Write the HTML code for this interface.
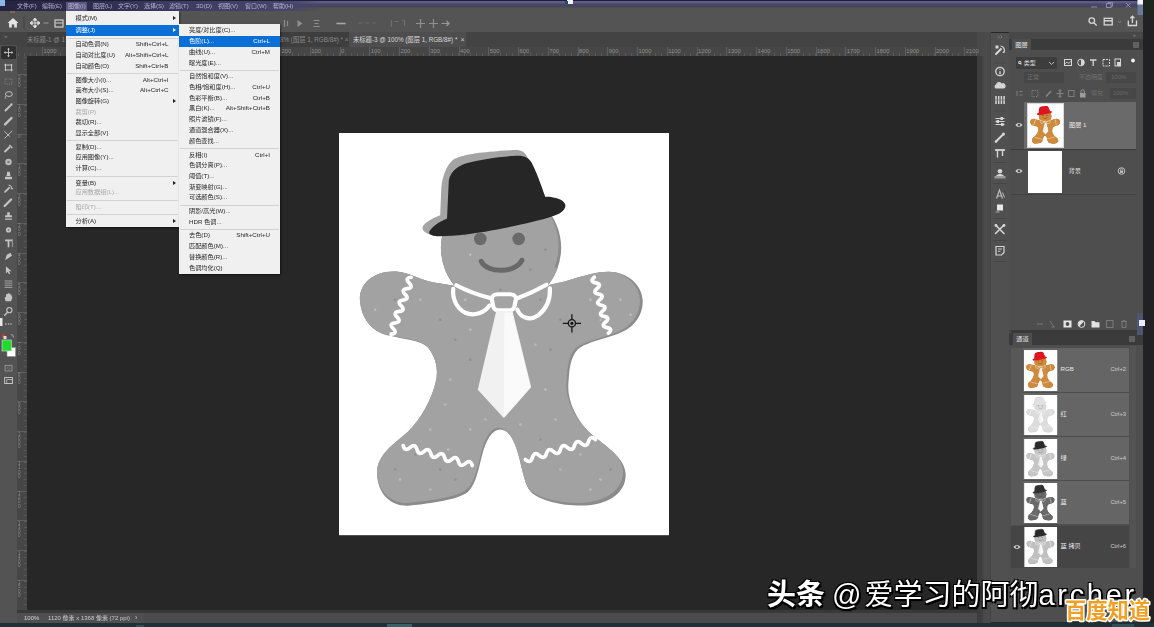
<!DOCTYPE html>
<html lang="zh-CN">
<head>
<meta charset="utf-8">
<title>Photoshop</title>
<style>
html,body{margin:0;padding:0;}
body{width:1154px;height:627px;overflow:hidden;background:#282828;position:relative;font-family:"Liberation Sans","Noto Sans CJK SC",sans-serif;font-size:7px;color:#ddd;}
.abs{position:absolute;}
#ui{position:absolute;left:0;top:0;width:1154px;height:627px;filter:blur(0.45px);}
#stage{position:absolute;left:0;top:0;width:1154px;height:627px;overflow:hidden;}
/* top bars */
#titleline{left:0;top:0;width:1143px;height:8px;background:linear-gradient(#1f1e36 0,#1f1e36 1px,#62608c 1px,#5a587f 3px,#4a4866 4px,#45435f 6px,#505050 8px);}
#menubar{z-index:2;left:0;top:1px;width:330px;height:10px;background:linear-gradient(90deg,#262440 0,#2c2a48 80px,#3c3a5e 160px,#46446a 285px,rgba(70,68,106,0) 320px);}
#menubar span{position:absolute;top:1px;line-height:9px;font-size:6px;color:#b4b2d6;white-space:nowrap;}
#optbar{left:0;top:8px;width:1143px;height:24px;background:#545454;}
#tabbar{left:0;top:32px;width:977px;height:16px;background:#434343;}
#hruler{z-index:1;left:17px;top:47px;width:963px;height:9px;background:#464646;}
#hruler span{position:absolute;top:0;font-size:5.800px;line-height:8px;color:#909090;}
#toolbar{left:0;top:45px;width:17px;height:578px;z-index:1;background:#535353;}
#vruler{left:17px;top:56px;width:10px;height:557px;background:#464646;}
#canvasbg{left:27px;top:56px;width:950px;height:554px;background:#272727;box-shadow:1px 0 0 #323232,0 1px 0 #323232;}
#statusbar{left:0;top:613px;width:977px;height:10px;background:#4f4f4f;box-shadow:0 -3px 0 #393939;}
#taskbar{left:0;top:623px;width:1154px;height:4px;background:#1d3238;}
#rightdark{left:1143px;top:0;width:11px;height:627px;background:#222224;}
#dockgap{left:977px;top:32px;width:14px;height:591px;background:linear-gradient(90deg,#3c3c3c 0,#3f3f3f 5px,#4a4a4a 7px) 0 24px no-repeat,#4a4a4a;}
#iconstrip{left:991px;top:33px;width:18px;height:589px;background:#505050;box-shadow:-1px 0 0 #444,1px 0 0 #474747;}
#panelcol{left:1009px;top:32px;width:134px;height:590px;background:#484848;}

#hruler i{position:absolute;top:0;width:1px;height:9px;background:#5e5e5e;}
#hruler{background-image:repeating-linear-gradient(90deg,#585858 0,#585858 1px,transparent 1px,transparent 5.950px);background-position:1.200px 6px;background-size:100% 3px;background-repeat:no-repeat;}
#vruler i{position:absolute;left:0;height:1px;width:10px;background:#5e5e5e;}
#vruler span{position:absolute;left:1px;width:4px;font-size:4.500px;line-height:4.200px;color:#8c8c8c;word-break:break-all;white-space:normal;}
#vruler{background-image:repeating-linear-gradient(180deg,#585858 0,#585858 1px,transparent 1px,transparent 5.950px);background-position:7px 0.700px;background-size:3px 100%;background-repeat:no-repeat;}
/* right panels */
#panelcol .hdr{position:absolute;left:0;width:134px;height:11px;background:#3b3b3b;}
#panelcol .hdr .tab{position:absolute;left:3px;top:0;height:11px;width:19px;background:#4e4e4e;color:#e6e6e6;font-size:6.200px;line-height:11px;text-align:center;}
#panelcol .body{position:absolute;left:0;width:134px;background:#4e4e4e;}
.row{position:absolute;left:12px;width:113px;background:#686868;}
.row .nm{position:absolute;font-size:6.200px;color:#e8e8e8;white-space:nowrap;line-height:8px;}
.row .sc{position:absolute;font-size:5.800px;color:#cfcfcf;white-space:nowrap;line-height:8px;right:8px;}
.th{position:absolute;display:block;}
.eye{position:absolute;width:7px;height:5px;}
/* menus */
.menu{z-index:5;background:#f0f0f0;color:#262626;font-size:6.200px;box-shadow:1px 1px 2px rgba(0,0,0,.5);}
.menu .it{position:absolute;left:0;right:0;height:10.6px;line-height:10.6px;white-space:nowrap;}
.menu .it b{font-weight:normal;position:absolute;left:10px;}
.menu .it i{font-style:normal;position:absolute;right:10px;}
.menu .it.dis{color:#a8a8a8;}
.menu .it.hl{background:#0a6fd6;color:#fff;}
.menu .sep{position:absolute;left:1px;right:1px;height:1px;background:#d2d2d2;}
.menu u.arr{position:absolute;right:3px;top:3px;width:0;height:0;border-left:3px solid #222;border-top:2.5px solid transparent;border-bottom:2.5px solid transparent;}
.menu .hl u.arr{border-left-color:#fff;}
</style>
</head>
<body>
<div id="stage">
<div id="ui">
<div class="abs" id="canvasbg"></div>
<div class="abs" id="titleline"></div>
<div class="abs" id="menubar">
<div class="abs" style="left:66px;top:1px;width:21px;height:9px;background:#5a5880"></div><span style="left:17px">文件(F)</span><span style="left:42px">编辑(E)</span><span style="left:68px">图像(I)</span><span style="left:93px">图层(L)</span><span style="left:118px">文字(Y)</span><span style="left:144px">选择(S)</span><span style="left:169px">滤镜(T)</span><span style="left:196px">3D(D)</span><span style="left:218px">视图(V)</span><span style="left:245px">窗口(W)</span><span style="left:273px">帮助(H)</span>
</div>
<div class="abs" id="optbar">
<svg class="abs" style="left:0;top:0" width="1143" height="24" viewBox="-0.5 7 1143 24">
<rect x="66" y="8" width="21" height="3" fill="#6a6a6a"/>
<path d="M12.5 17 L7 22 H8.6 V26.5 H11.3 V23.4 H13.7 V26.5 H16.4 V22 H18 Z" fill="#e4e4e4"/>
<rect x="23" y="15" width="1" height="13" fill="#454545"/>
<path d="M34.500 18 V26 M30.500 22 H38.500 M34.500 17 l-1.800 2.200 h3.600 z M34.500 27 l-1.800 -2.200 h3.600 z M29.500 22 l2.200 -1.800 v3.600 z M39.500 22 l-2.200 -1.800 v3.600 z" stroke="#dcdcdc" stroke-width="1" fill="#dcdcdc"/>
<path d="M43 22 h5" stroke="#9a9a9a" stroke-width="1"/>
<rect x="54.5" y="19" width="8" height="7" fill="none" stroke="#d0d0d0" stroke-width="1.2"/><path d="M55 22 h7" stroke="#d0d0d0"/>
<g stroke="#8e8e8e" stroke-width="1.2" fill="none">
<path d="M284 19 v7 M287 20 v5"/><path d="M297 19 l5 3.5 l-5 3.5 z" fill="#8e8e8e" stroke="none"/>
<path d="M313 19.5 h6 M314 22.5 h4 M313 25.5 h6"/>
<path d="M336 22.5 h9" stroke="#a8a8a8" stroke-width="1.6"/>
<path d="M358 22 h4 M365 22 h4 M372 22 h3" stroke="#6c6c6c"/>
<path d="M391 19 v7 M394 20.5 h4 M402 18.5 l3 3 M404 19 v6" stroke="#6e6e6e"/>
<path d="M420 18 v9 M415.5 22.5 h9" stroke="#909090"/>
<path d="M433 18 v9 M428.500 22.5 h9" stroke="#909090"/>
<path d="M441 22.5 h7 M446 20 l2.500 2.500 l-2.500 2.500" stroke="#9a9a9a"/>
</g>
<g stroke="#d6d6d6" stroke-width="1.300" fill="none">
<circle cx="1091.300" cy="19.600" r="2.800"/><path d="M1093.400 21.700 l2.800 2.800"/>
<rect x="1103.700" y="17.300" width="8" height="6.600"/><path d="M1103.700 19.800 h8" stroke-width="1.500"/>
<path d="M1117.500 20 l1.600 1.800 l1.600 -1.800" stroke="#8a8a8a" stroke-width="0.900"/>
<path d="M1127.800 19.500 v5 h8.200 v-5"/><path d="M1131.900 22 v-6.500 M1129.900 17.300 l2 -2.200 l2 2.200"/>
</g>
<g stroke="#b4b2d4" stroke-width="1" fill="none" transform="translate(0,-8)">
</g>
</svg>
</div>
<div class="abs" id="tabbar">
<div class="abs" style="left:27px;top:0;width:322px;height:16px;background:#3e3e3e"></div>
<div class="abs" style="left:349px;top:0;width:117px;height:16px;background:#4e4e4e"></div>
<span class="abs" style="left:4px;top:0;font-size:6px;line-height:9px;color:#888">»</span>
<span class="abs" style="left:27px;top:2px;font-size:6.300px;line-height:11px;color:#8a8a8a;white-space:nowrap">未标题-1 @ 1</span>
<span class="abs" style="left:280px;top:2px;font-size:6.300px;line-height:11px;color:#8a8a8a;white-space:nowrap">8% (图层 1, RGB/8#) * ×</span>
<span class="abs" style="left:353px;top:2px;font-size:6.300px;line-height:11px;color:#dadada;white-space:nowrap">未标题-3 @ 100% (图层 1, RGB/8#) * &nbsp;×</span>
</div>
<div class="abs" id="hruler"><i style="left:25.0px"></i><span style="left:26.5px">1000</span><i style="left:54.8px"></i><span style="left:56.2px">900</span><i style="left:84.5px"></i><span style="left:86.0px">800</span><i style="left:114.2px"></i><span style="left:115.8px">700</span><i style="left:144.0px"></i><span style="left:145.5px">600</span><i style="left:173.8px"></i><span style="left:175.2px">500</span><i style="left:203.5px"></i><span style="left:205.0px">400</span><i style="left:233.2px"></i><span style="left:234.8px">300</span><i style="left:263.0px"></i><span style="left:264.5px">200</span><i style="left:292.8px"></i><span style="left:294.2px">100</span><i style="left:322.5px"></i><span style="left:324.0px">0</span><i style="left:352.2px"></i><span style="left:353.8px">100</span><i style="left:382.0px"></i><span style="left:383.5px">200</span><i style="left:411.8px"></i><span style="left:413.2px">300</span><i style="left:441.5px"></i><span style="left:443.0px">400</span><i style="left:471.2px"></i><span style="left:472.8px">500</span><i style="left:501.0px"></i><span style="left:502.5px">600</span><i style="left:530.8px"></i><span style="left:532.2px">700</span><i style="left:560.5px"></i><span style="left:562.0px">800</span><i style="left:590.2px"></i><span style="left:591.8px">900</span><i style="left:620.0px"></i><span style="left:621.5px">1000</span><i style="left:649.8px"></i><span style="left:651.2px">1100</span><i style="left:679.5px"></i><span style="left:681.0px">1200</span><i style="left:709.2px"></i><span style="left:710.8px">1300</span><i style="left:739.0px"></i><span style="left:740.5px">1400</span><i style="left:768.8px"></i><span style="left:770.2px">1500</span><i style="left:798.5px"></i><span style="left:800.0px">1600</span><i style="left:828.2px"></i><span style="left:829.8px">1700</span><i style="left:858.0px"></i><span style="left:859.5px">1800</span><i style="left:887.8px"></i><span style="left:889.2px">1900</span><i style="left:917.5px"></i><span style="left:919.0px">2000</span><i style="left:947.2px"></i><span style="left:948.8px">2100</span></div>
<div class="abs" id="toolbar"><svg class="abs" style="left:0;top:0" width="17" height="568" viewBox="0 45 17 568"><rect x="1" y="46" width="15" height="13" rx="1.500" fill="#2f2f2f"/><g transform="translate(8.500,52.5) scale(0.860)"><path d="M0-4.500V4.500M-4.500 0H4.500" stroke="#c4c4c4" stroke-width="1.100"/><path d="M0-5.500l-1.700 2h3.400zM0 5.500l-1.700-2h3.400zM-5.500 0l2-1.700v3.400zM5.500 0l-2-1.700v3.400z" fill="#c4c4c4"/></g><g transform="translate(8.500,67.5) scale(0.860)"><path d="M-3.500-4.500V4M3.500-4V4.500M-5-3H4.500M-4.500 3H5" stroke="#c4c4c4" stroke-width="1.200" fill="none"/></g><g transform="translate(8.500,81.5) scale(0.860)"><rect x="-4" y="-3" width="8" height="6" fill="none" stroke="#8a8a8a" stroke-dasharray="1.500 1.200" stroke-width="0.900"/></g><g transform="translate(8.500,94.5) scale(0.860)"><ellipse cx="0.500" cy="-0.500" rx="4" ry="2.800" fill="none" stroke="#c4c4c4" stroke-width="1.100"/><path d="M-3 1.500q-1.500 2 0 3.500" stroke="#c4c4c4" fill="none" stroke-width="1"/></g><g transform="translate(8.500,107.5) scale(0.860)"><path d="M-3.500 3.500L2.500-2.500" stroke="#c4c4c4" stroke-width="2.200" stroke-linecap="round"/><circle cx="3.500" cy="-3.500" r="1.300" fill="#c4c4c4"/></g><g transform="translate(8.500,121) scale(0.860)"><path d="M-4 4L3.500-3.500" stroke="#c4c4c4" stroke-width="2.800" stroke-linecap="round"/></g><g transform="translate(8.500,134.5) scale(0.860)"><path d="M-4.500 4.500L4-4M-4.500-3.500L1 2" stroke="#c4c4c4" stroke-width="1.100" stroke-linecap="round"/></g><g transform="translate(8.500,148.5) scale(0.860)"><path d="M-4 3.500L1 -1.500" stroke="#c4c4c4" stroke-width="2.200" stroke-linecap="round"/><path d="M1-4l3.500 3.500" stroke="#c4c4c4" stroke-width="1.500"/></g><g transform="translate(8.500,162) scale(0.860)"><circle cx="0" cy="0" r="3.700" fill="#bdbdbd"/><circle cx="0" cy="0" r="1.500" fill="#7d7d7d"/></g><g transform="translate(8.500,175.5) scale(0.860)"><path d="M-1.500-4.500h3l0.800 5h-4.600zM-4 1.500h8v3h-8z" fill="#c4c4c4"/></g><g transform="translate(8.500,188.5) scale(0.860)"><path d="M-4 4L1-1" stroke="#c4c4c4" stroke-width="2" stroke-linecap="round"/><path d="M0-4a4 4 0 0 1 4 4" stroke="#c4c4c4" fill="none" stroke-width="1.100"/><path d="M2.500-0.500l1.500 2 1.500-2z" fill="#c4c4c4"/></g><g transform="translate(8.500,202.5) scale(0.860)"><path d="M-4.500 4L3-3.500" stroke="#c4c4c4" stroke-width="2.600" stroke-linecap="round"/></g><g transform="translate(8.500,216) scale(0.860)"><path d="M-1.500-4.500h3v3.500h2.500v2.500h-8v-2.500h2.500zM-4 3h8v1.500h-8z" fill="#c4c4c4"/></g><g transform="translate(8.500,229.5) scale(0.860)"><circle cx="0" cy="0.500" r="3" fill="#c4c4c4"/><circle cx="0" cy="0.500" r="1.100" fill="#777"/></g><g transform="translate(8.500,243) scale(0.860)"><path d="M-4-4h8v2h-3v7h-2v-7h-3z" fill="#c4c4c4"/><path d="M4.500-4.500v9" stroke="#c4c4c4" stroke-width="0.800"/></g><g transform="translate(8.500,256.5) scale(0.860)"><path d="M-4 4.500L-2-2 2.500-4.500 4-1 -4 4.500z" fill="#c4c4c4"/></g><g transform="translate(8.500,270) scale(0.860)"><path d="M-3-4.500L3.500 1.500H0.500L2 4.500 0.500 5 -1 2 -3 4z" fill="#c4c4c4"/></g><g transform="translate(8.500,284) scale(0.860)"><path d="M-4.500-3.500h9M-4.500-1h9M-4.500 1.500h9M-4.500 4h9" stroke="#a8a8a8" stroke-width="1.100"/></g><g transform="translate(8.500,297.5) scale(0.860)"><path d="M-3.500 4.500L-4.500 0 -3-0.500 -2.500-4 -1-4 -0.500-5 1-5 1.500-4 3-3.500 4.500 0 3 4.500z" fill="#c4c4c4"/></g><g transform="translate(8.500,311) scale(0.860)"><circle cx="1" cy="-1" r="3" fill="none" stroke="#c4c4c4" stroke-width="1.300"/><path d="M-1 1.500L-4.500 5" stroke="#c4c4c4" stroke-width="1.600" stroke-linecap="round"/></g><g transform="translate(8.500,324) scale(0.860)"><circle cx="-3" cy="0" r="0.900" fill="#c4c4c4"/><circle cx="0" cy="0" r="0.900" fill="#c4c4c4"/><circle cx="3" cy="0" r="0.900" fill="#c4c4c4"/></g><rect x="0" y="318" width="2.500" height="8" fill="#e8e8e8"/><path d="M2 334.500h3v3h-3z" fill="#d33"/><path d="M3.500 336h3v3h-3z" fill="#ddd"/><path d="M11 334.500q2.500 0 2.500 3" stroke="#bbb" fill="none" stroke-width="0.800"/><rect x="7" y="347.500" width="8.500" height="9" fill="#fff" stroke="#888" stroke-width="0.500"/><rect x="2" y="340" width="9.500" height="11" fill="#1fdc2a" stroke="#ddd" stroke-width="0.600"/><g transform="translate(8.500,368) scale(0.860)"><rect x="-4" y="-3" width="8" height="6.500" fill="none" stroke="#9a9a9a" stroke-width="1"/><circle cx="0" cy="0.200" r="1.600" fill="none" stroke="#9a9a9a" stroke-width="0.800" stroke-dasharray="1 0.700"/></g><g transform="translate(8.500,380.5) scale(0.860)"><rect x="-4.500" y="-3.500" width="9" height="7" fill="none" stroke="#c4c4c4" stroke-width="1.100"/><rect x="-2" y="-1" width="6.500" height="4.500" fill="none" stroke="#c4c4c4" stroke-width="0.900"/></g></svg></div>
<div class="abs" id="vruler"><i style="top:18.0px"></i><span style="top:19.5px">200</span><i style="top:47.8px"></i><span style="top:49.2px">100</span><i style="top:77.5px"></i><span style="top:79.0px">0</span><i style="top:107.2px"></i><span style="top:108.8px">100</span><i style="top:137.0px"></i><span style="top:138.5px">200</span><i style="top:166.8px"></i><span style="top:168.2px">300</span><i style="top:196.5px"></i><span style="top:198.0px">400</span><i style="top:226.2px"></i><span style="top:227.8px">500</span><i style="top:256.0px"></i><span style="top:257.5px">600</span><i style="top:285.8px"></i><span style="top:287.2px">700</span><i style="top:315.5px"></i><span style="top:317.0px">800</span><i style="top:345.2px"></i><span style="top:346.8px">900</span><i style="top:375.0px"></i><span style="top:376.5px">1000</span><i style="top:404.8px"></i><span style="top:406.2px">1100</span><i style="top:434.5px"></i><span style="top:436.0px">1200</span><i style="top:464.2px"></i><span style="top:465.8px">1300</span><i style="top:494.0px"></i><span style="top:495.5px">1400</span><i style="top:523.8px"></i><span style="top:525.2px">1500</span></div>
<div class="abs" id="statusbar">
<div class="abs" style="left:0;top:0;width:17px;height:10px;background:#535353"></div>
<div class="abs" style="left:144px;top:0;width:833px;height:10px;background:#4b4b4b"></div>
<span class="abs" style="left:24px;top:1px;font-size:6px;line-height:8px;color:#d4d4d4;white-space:nowrap">100%</span>
<span class="abs" style="left:48px;top:1px;font-size:6px;line-height:8px;color:#c8c8c8;white-space:nowrap">1120 像素 x 1368 像素 (72 ppi)</span>
<span class="abs" style="left:135px;top:0.500px;font-size:7px;line-height:8px;color:#c8c8c8">›</span>
</div>
<div class="abs" id="dockgap"></div>
<div class="abs" id="iconstrip"><svg class="abs" style="left:0;top:0" width="18" height="589" viewBox="991 33 18 589"><path d="M998 35.500l1.500 1.500l-1.500 1.500M1000.500 35.500l1.500 1.500l-1.500 1.500" stroke="#8a8a8a" fill="none" stroke-width="0.700"/><rect x="993" y="62.5" width="14" height="1" fill="#454545"/><rect x="993" y="110.5" width="14" height="1" fill="#454545"/><rect x="993" y="162" width="14" height="1" fill="#454545"/><rect x="993" y="183" width="14" height="1" fill="#454545"/><rect x="993" y="218" width="14" height="1" fill="#454545"/><rect x="993" y="240" width="14" height="1" fill="#454545"/><rect x="993" y="261" width="14" height="1" fill="#454545"/><g transform="translate(1000,50.5)"><path d="M-4 3.500l5-5" stroke="#d6d6d6" stroke-width="2" stroke-linecap="round"/><path d="M0.500-4.500a4.200 4.200 0 0 1 3.500 6" stroke="#d6d6d6" fill="none" stroke-width="1.200"/><path d="M2 2l2.500 0.500 0.500-2.500z" fill="#d6d6d6"/><rect x="-4.500" y="-5" width="3" height="3" fill="#d6d6d6"/></g><g transform="translate(1000,71.5)"><circle r="4.200" fill="none" stroke="#d6d6d6" stroke-width="1.300"/><path d="M0-2.200v0.800M0-0.300v3" stroke="#d6d6d6" stroke-width="1.300"/></g><g transform="translate(1000,86)"><path d="M-4.500 2.500a2.300 2.300 0 0 1 0.500-4a3 3 0 0 1 5.500-1a2.500 2.500 0 0 1 2.500 5z" fill="#d6d6d6"/></g><g transform="translate(1000,100)"><path d="M-4-4v8M-1.300-4v8M1.400-4v8M4.100-4v8" stroke="#d6d6d6" stroke-width="1.500"/><path d="M-5 0h10" stroke="#777" stroke-width="0.800"/></g><g transform="translate(1000,121.5)"><path d="M-4.500-3h9M-4.500 0h9M-4.500 3h9" stroke="#d6d6d6" stroke-width="1.200"/><rect x="0.500" y="-4.500" width="2.500" height="3" fill="#d6d6d6"/><rect x="-3.500" y="-1.500" width="2.500" height="3" fill="#d6d6d6"/><rect x="1" y="1.500" width="2.500" height="3" fill="#d6d6d6"/></g><g transform="translate(1000,137.5)"><path d="M-4 4L3-3" stroke="#d6d6d6" stroke-width="2" stroke-linecap="round"/><circle cx="3.500" cy="-3.500" r="1.500" fill="#d6d6d6"/><circle cx="-4" cy="4" r="1.300" fill="#d6d6d6"/></g><g transform="translate(1000,153)"><path d="M-5-3h10" stroke="#d6d6d6" stroke-width="1.800"/><path d="M-2.500-3v7.500M2.500-3v6" stroke="#d6d6d6" stroke-width="1.400"/></g><g transform="translate(1000,173.5)"><circle cx="0" cy="-2.200" r="2.300" fill="#d6d6d6"/><path d="M-4.500 4.500a4.500 4 0 0 1 9 0z" fill="#d6d6d6"/><rect x="-5.500" y="2.500" width="11" height="2.500" fill="#9a9a9a"/></g><g transform="translate(1000,194.5)"><path d="M-3.500 4l3-8.500 3 8.500M-2.500 1.500h4.500" stroke="#bdbdbd" fill="none" stroke-width="1.200"/><path d="M2.500-2l2 5" stroke="#bdbdbd" stroke-width="1"/></g><g transform="translate(1000,207.5)"><rect x="-3" y="-3" width="6" height="6" fill="#e8e8e8"/><path d="M-4.500 4.500h4" stroke="#aaa" stroke-width="1"/></g><g transform="translate(1000,229)"><path d="M-4.500-4L4 4.500M4-4L-4.500 4.500" stroke="#d6d6d6" stroke-width="1.600" stroke-linecap="round"/><circle cx="-4" cy="-3.500" r="1.400" fill="#d6d6d6"/><circle cx="4" cy="-3.500" r="1.400" fill="#d6d6d6"/></g><g transform="translate(1000,250.5)"><path d="M-4-4h8v6l-2.500 2.500h-5.500z" fill="none" stroke="#d6d6d6" stroke-width="1.200"/><path d="M-2-1.500h4M-2 0.800h2.500" stroke="#d6d6d6" stroke-width="0.900"/></g></svg></div>
<div class="abs" id="panelcol">
<span class="abs" style="left:124px;top:1px;font-size:5px;line-height:5px;color:#8a8a8a">»</span>
<div class="hdr" style="top:6.5px"><div class="tab">图层</div><svg class="abs" style="right:4px;top:3px" width="6" height="6"><path d="M0 1h6M0 3h6M0 5h6" stroke="#9a9a9a" stroke-width="0.800"/></svg></div>
<div class="body" style="top:17.5px;height:280.5px"></div>
<div class="abs" style="left:7px;top:25px;width:41px;height:12px;background:#3d3d3d;border-radius:1px"></div>
<span class="abs" style="left:9px;top:26px;font-size:6px;line-height:10px;color:#dcdcdc;white-space:nowrap">ᑫ 类型</span>
<svg class="abs" style="left:39px;top:29px" width="8" height="5"><path d="M1 1l2.500 2.500l2.500 -2.500" stroke="#bbb" fill="none"/></svg>
<svg class="abs" style="left:51px;top:24px" width="82" height="14" viewBox="1060 56 82 14">
<rect x="1064.500" y="59.500" width="7" height="6" fill="none" stroke="#d8d8d8"/><path d="M1065 64l2-2 2 1.500 2-2.500" stroke="#d8d8d8" fill="none" stroke-width="0.800"/>
<circle cx="1081" cy="62.500" r="3.300" fill="none" stroke="#d8d8d8"/><path d="M1081 59.200 a3.300 3.300 0 0 1 0 6.600z" fill="#d8d8d8"/>
<path d="M1090 60h6.500M1093.200 60v6" stroke="#d8d8d8" stroke-width="1.300"/>
<rect x="1103" y="59.500" width="6.500" height="6.500" fill="none" stroke="#d8d8d8" stroke-dasharray="2 1"/>
<rect x="1115" y="59" width="5.500" height="7" fill="none" stroke="#d8d8d8"/><path d="M1117 62h4v4h-4z" fill="#d8d8d8"/>
<circle cx="1133" cy="60.500" r="1.900" fill="#f2f2f2"/>
</svg>
<div class="abs" style="left:15px;top:40px;width:40px;height:11px;background:#464646"></div>
<span class="abs" style="left:18px;top:41px;font-size:6px;line-height:9px;color:#6f6f6f">正常</span>
<span class="abs" style="left:70px;top:41px;font-size:6px;line-height:9px;color:#707070;white-space:nowrap">不透明度:</span>
<div class="abs" style="left:97px;top:40px;width:30px;height:11px;background:#474747"></div>
<span class="abs" style="left:102px;top:41px;font-size:6px;line-height:9px;color:#6a6a6a">100%</span>
<svg class="abs" style="left:3px;top:55px" width="126" height="13" viewBox="1012 87 126 13">
<g stroke="#7c7c7c" fill="none" stroke-width="1">
<path d="M1017 91v5M1019.500 91.500h3M1019.500 95h3"/>
<rect x="1032" y="90.500" width="6" height="6" stroke-dasharray="1.500 1"/>
<path d="M1046 96.500l5-5.500" stroke-width="1.400" stroke="#8a8a8a"/>
<path d="M1060 90v7M1056.500 93.500h7M1060 89.500l-1.200 1.400h2.400zM1060 97.500l-1.200 -1.400h2.400z" stroke="#858585"/>
<rect x="1068.500" y="90.500" width="5.500" height="6"/>
<rect x="1080" y="93" width="5.500" height="4.500" fill="#9c9c9c" stroke="none"/><path d="M1081 93v-1.500a1.700 1.700 0 0 1 3.400 0v1.500" stroke="#9c9c9c"/>
</g></svg>
<span class="abs" style="left:82px;top:57px;font-size:6px;line-height:9px;color:#6c6c6c;white-space:nowrap">填充:</span>
<div class="abs" style="left:101px;top:56px;width:26px;height:11px;background:#474747"></div>
<span class="abs" style="left:104px;top:57px;font-size:6px;line-height:9px;color:#6a6a6a">100%</span>
<div class="row" style="left:15px;top:70px;width:112px;height:46.500px;background:#6a6a6a"><span class="nm" style="left:45px;top:19px">图层 1</span></div>
<div class="abs" style="left:17.5px;top:70.5px;width:37px;height:45px;background:#d9d9d9"></div>
<svg class="th" style="left:18.5px;top:71.5px;--body:#cf8a3c;--edge:#b87428;--hat:#e0151f;--hatsh:#c4121b;--eye:#7a4a1c;--knot:#cf8a3c;--spk:0" width="35" height="43" viewBox="0 0 35 43" preserveAspectRatio="none"><use href="#gb" x="0" y="0" width="35" height="43"/></svg>
<svg class="abs" style="left:5.5px;top:90px" width="8" height="6" viewBox="0 0 8 6"><path d="M0.300 3 Q4 -1.200 7.700 3 Q4 7.200 0.300 3 Z" fill="#cfcfcf"/><circle cx="4" cy="3" r="1.300" fill="#4e4e4e"/></svg>
<div class="abs" style="left:2px;top:117px;width:125px;height:1px;background:#3c3c3c"></div>
<div class="abs" style="left:19px;top:119px;width:34px;height:41.500px;background:#fff"></div>
<span class="abs" style="left:59.5px;top:135px;font-size:6.200px;line-height:8px;color:#e4e4e4;white-space:nowrap">背景</span>
<svg class="abs" style="left:5.5px;top:136px" width="8" height="6" viewBox="0 0 8 6"><path d="M0.300 3 Q4 -1.200 7.700 3 Q4 7.200 0.300 3 Z" fill="#cfcfcf"/><circle cx="4" cy="3" r="1.300" fill="#4e4e4e"/></svg>
<svg class="abs" style="left:108px;top:134px" width="9" height="10" viewBox="0 0 9 10"><circle cx="4.500" cy="5" r="3.300" fill="none" stroke="#c6c6c6" stroke-width="1"/><rect x="3" y="4.500" width="3" height="2.300" fill="#c6c6c6"/><path d="M3.600 4.500v-1a0.900 0.900 0 0 1 1.800 0v1" stroke="#c6c6c6" fill="none" stroke-width="0.600"/></svg>
<div class="abs" style="left:2px;top:162px;width:125px;height:1px;background:#424242"></div>
<svg class="abs" style="left:21px;top:285px" width="110" height="14" viewBox="1030 317 110 14">
<path d="M1037 324h6" stroke="#6a6a6a" stroke-width="1.500"/>
<path d="M1050 321l4 6M1051 327h4" stroke="#6f6f6f" stroke-width="1.200" fill="none"/>
<rect x="1063.500" y="320.500" width="8" height="7" fill="#e6e6e6"/><circle cx="1067.500" cy="324" r="1.900" fill="#4e4e4e"/>
<circle cx="1081.500" cy="324" r="3.400" fill="none" stroke="#e0e0e0" stroke-width="1"/><path d="M1079.100 326.400 a3.400 3.400 0 0 1 4.800 -4.800z" fill="#e0e0e0"/>
<path d="M1091.500 321h3l1 1.200h4v5.300h-8z" fill="#e2e2e2"/>
<rect x="1106.500" y="320.500" width="6.500" height="7" fill="none" stroke="#7a7a7a"/>
<path d="M1121 321.500h6M1122 322v5.500h4v-5.500M1123 320.500h2" fill="none" stroke="#7a7a7a"/>
</svg>
<div class="abs" style="left:2px;top:298px;width:132px;height:3px;background:#3a3a3a"></div>
<div class="hdr" style="top:301px;height:11.500px"><div class="tab" style="left:4px;height:11.500px">通道</div><svg class="abs" style="right:8px;top:3px" width="6" height="6"><path d="M0 1h6M0 3h6M0 5h6" stroke="#9a9a9a" stroke-width="0.800"/></svg></div>
<div class="body" style="top:312.5px;height:277.5px"></div>
<div class="abs" style="left:121px;top:314px;width:6px;height:222px;background:#535353"></div><div class="abs" style="left:2px;top:316px;width:11.500px;height:176.500px;background:#585858"></div>
<div class="row" style="left:13.5px;top:316px;width:106.5px;height:43.5px;background:#656565"><span class="nm" style="left:38.0px;top:17.2px">RGB</span><span class="sc" style="top:17.2px;right:3px">Ctrl+2</span></div>
<svg class="th" style="left:15px;top:317.5px;--body:#cf8a3c;--edge:#b87428;--hat:#e0151f;--hatsh:#c4121b;--eye:#7a4a1c;--knot:#cf8a3c;--spk:0" width="33.500" height="41.0" viewBox="0 0 33.500 41.0" preserveAspectRatio="none"><use href="#gb" x="0" y="0" width="33.500" height="41.0"/></svg>
<div class="row" style="left:13.5px;top:361px;width:106.5px;height:43px;background:#656565"><span class="nm" style="left:38.0px;top:17.0px">红</span><span class="sc" style="top:17.0px;right:3px">Ctrl+3</span></div>
<svg class="th" style="left:15px;top:362.5px;--body:#dcdcdc;--edge:#cfcfcf;--hat:#e2e2e2;--hatsh:#d0d0d0;--eye:#9a9a9a;--knot:#dcdcdc;--spk:0" width="33.500" height="40.5" viewBox="0 0 33.500 40.5" preserveAspectRatio="none"><use href="#gb" x="0" y="0" width="33.500" height="40.5"/></svg>
<div class="row" style="left:13.5px;top:405px;width:106.5px;height:43.0px;background:#656565"><span class="nm" style="left:38.0px;top:17.0px">绿</span><span class="sc" style="top:17.0px;right:3px">Ctrl+4</span></div>
<svg class="th" style="left:15px;top:406.5px;--body:#c6c6c6;--edge:#b4b4b4;--hat:#2a2a2a;--hatsh:#9d9d9d;--eye:#8a8a8a;--knot:#c6c6c6;--spk:0" width="33.500" height="40.5" viewBox="0 0 33.500 40.5" preserveAspectRatio="none"><use href="#gb" x="0" y="0" width="33.500" height="40.5"/></svg>
<div class="row" style="left:13.5px;top:449px;width:106.5px;height:43px;background:#656565"><span class="nm" style="left:38.0px;top:17.0px">蓝</span><span class="sc" style="top:17.0px;right:3px">Ctrl+5</span></div>
<svg class="th" style="left:15px;top:450.5px;--body:#6a6a6a;--edge:#5c5c5c;--hat:#303030;--hatsh:#555;--eye:#444;--knot:#6a6a6a;--spk:0" width="33.500" height="40.5" viewBox="0 0 33.500 40.5" preserveAspectRatio="none"><use href="#gb" x="0" y="0" width="33.500" height="40.5"/></svg>
<div class="row" style="left:2px;top:493.5px;width:118px;height:42.5px;background:#454545"><span class="nm" style="left:49.5px;top:16.8px">蓝 拷贝</span><span class="sc" style="top:16.8px;right:3px">Ctrl+6</span></div>
<svg class="th" style="left:15px;top:495.0px;--body:#c0c0c0;--edge:#adadad;--hat:#2a2a2a;--hatsh:#9a9a9a;--eye:#858585;--knot:#c0c0c0;--spk:0" width="33.500" height="40.0" viewBox="0 0 33.500 40.0" preserveAspectRatio="none"><use href="#gb" x="0" y="0" width="33.500" height="40.0"/></svg>
<svg class="abs" style="left:4px;top:511.75px" width="8" height="6" viewBox="0 0 8 6"><path d="M0.300 3 Q4 -1.200 7.700 3 Q4 7.200 0.300 3 Z" fill="#cfcfcf"/><circle cx="4" cy="3" r="1.300" fill="#4e4e4e"/></svg>
</div>
<div class="abs" id="rightdark"></div>
<div class="abs" id="taskbar"><div class="abs" style="left:387px;top:0.500px;width:25px;height:3.500px;background:#35636a"></div><div class="abs" style="left:136px;top:2px;width:8px;height:2px;background:#2c5057"></div><div class="abs" style="left:1112px;top:1px;width:22px;height:3px;background:#2c5057"></div></div>

<!-- DOCUMENT -->
<svg width="0" height="0" style="position:absolute">
<defs>
<symbol id="gb" viewBox="339 133 330 403">
<rect x="339" y="133" width="330" height="403" fill="var(--paper,#fff)"/>
<clipPath id="gbclip"><circle cx="500.7" cy="248" r="60"/><path d="M453 286 C445 284.500 433 283 425 280.500 C417 278 408 273 398 272 C372 270 358 286 360 302 C362 322 375 334 390 336 C405 340 420 340 428 348 C436 358 438 370 436 380 C432 400 420 420 408 432 C395 444 376 455 377 475 C378 498 395 508 410 506 C430 504 460 500 468 492 C476 484 478 470 482 455 C486 440 492 430 500 430 C508 430 514 440 518 455 C522 470 524 484 530 492 C540 502 565 507 585 506 C605 505 626 495 625 474 C624 456 600 444 588 432 C576 420 566 400 568 383 C569 368 570 358 577 350 C585 342 610 338 622 332 C636 326 643 312 642 300 C641 284 625 271.500 607.500 272 C598 272 585 275.500 570 280 C562 282.500 555 284 548 285.500 Z"/></clipPath>
<g fill="var(--edge,#8b8b8b)"><circle cx="500.7" cy="248" r="60"/><path d="M453 286 C445 284.500 433 283 425 280.500 C417 278 408 273 398 272 C372 270 358 286 360 302 C362 322 375 334 390 336 C405 340 420 340 428 348 C436 358 438 370 436 380 C432 400 420 420 408 432 C395 444 376 455 377 475 C378 498 395 508 410 506 C430 504 460 500 468 492 C476 484 478 470 482 455 C486 440 492 430 500 430 C508 430 514 440 518 455 C522 470 524 484 530 492 C540 502 565 507 585 506 C605 505 626 495 625 474 C624 456 600 444 588 432 C576 420 566 400 568 383 C569 368 570 358 577 350 C585 342 610 338 622 332 C636 326 643 312 642 300 C641 284 625 271.500 607.500 272 C598 272 585 275.500 570 280 C562 282.500 555 284 548 285.500 Z"/></g>
<g clip-path="url(#gbclip)"><g fill="var(--body,#a2a2a2)" stroke="var(--body,#a2a2a2)" stroke-width="1" transform="translate(-1.600,-1.800)"><circle cx="500.7" cy="248" r="58.500"/><path d="M453 286 C445 284.500 433 283 425 280.500 C417 278 408 273 398 272 C372 270 358 286 360 302 C362 322 375 334 390 336 C405 340 420 340 428 348 C436 358 438 370 436 380 C432 400 420 420 408 432 C395 444 376 455 377 475 C378 498 395 508 410 506 C430 504 460 500 468 492 C476 484 478 470 482 455 C486 440 492 430 500 430 C508 430 514 440 518 455 C522 470 524 484 530 492 C540 502 565 507 585 506 C605 505 626 495 625 474 C624 456 600 444 588 432 C576 420 566 400 568 383 C569 368 570 358 577 350 C585 342 610 338 622 332 C636 326 643 312 642 300 C641 284 625 271.500 607.500 272 C598 272 585 275.500 570 280 C562 282.500 555 284 548 285.500 Z" transform="translate(500 390) scale(0.988) translate(-500 -390)"/><path d="M440 270h120v50h-120z"/></g></g>
<g class="spk" opacity="var(--spk,1)"><circle cx="395" cy="300" r="1.3" fill="#8f8f8f"/><circle cx="375" cy="310" r="1.3" fill="#bdbdbd"/><circle cx="420" cy="300" r="1.3" fill="#b8b8b8"/><circle cx="440" cy="320" r="1.3" fill="#909090"/><circle cx="455" cy="340" r="1.3" fill="#909090"/><circle cx="470" cy="360" r="1.3" fill="#8f8f8f"/><circle cx="450" cy="380" r="1.3" fill="#b8b8b8"/><circle cx="445" cy="405" r="1.3" fill="#b8b8b8"/><circle cx="430" cy="430" r="1.3" fill="#b8b8b8"/><circle cx="415" cy="455" r="1.3" fill="#909090"/><circle cx="400" cy="480" r="1.3" fill="#bdbdbd"/><circle cx="430" cy="490" r="1.3" fill="#b8b8b8"/><circle cx="455" cy="480" r="1.3" fill="#8f8f8f"/><circle cx="448" cy="450" r="1.3" fill="#bdbdbd"/><circle cx="470" cy="430" r="1.3" fill="#bdbdbd"/><circle cx="540" cy="440" r="1.3" fill="#8f8f8f"/><circle cx="560" cy="470" r="1.3" fill="#b8b8b8"/><circle cx="590" cy="490" r="1.3" fill="#bdbdbd"/><circle cx="610" cy="470" r="1.3" fill="#8f8f8f"/><circle cx="580" cy="455" r="1.3" fill="#b8b8b8"/><circle cx="555" cy="420" r="1.3" fill="#bdbdbd"/><circle cx="545" cy="390" r="1.3" fill="#bdbdbd"/><circle cx="550" cy="350" r="1.3" fill="#8f8f8f"/><circle cx="560" cy="320" r="1.3" fill="#8f8f8f"/><circle cx="590" cy="300" r="1.3" fill="#bdbdbd"/><circle cx="620" cy="300" r="1.3" fill="#bdbdbd"/><circle cx="630" cy="315" r="1.3" fill="#bdbdbd"/><circle cx="600" cy="320" r="1.3" fill="#b8b8b8"/><circle cx="470" cy="255" r="1.3" fill="#bdbdbd"/><circle cx="530" cy="270" r="1.3" fill="#909090"/><circle cx="545" cy="250" r="1.3" fill="#8f8f8f"/><circle cx="465" cy="235" r="1.3" fill="#8f8f8f"/><circle cx="500" cy="290" r="1.3" fill="#8f8f8f"/><circle cx="540" cy="300" r="1.3" fill="#909090"/><circle cx="465" cy="300" r="1.3" fill="#bdbdbd"/><circle cx="485" cy="420" r="1.3" fill="#b8b8b8"/><circle cx="520" cy="425" r="1.3" fill="#bdbdbd"/><circle cx="535" cy="345" r="1.3" fill="#b8b8b8"/><circle cx="470" cy="330" r="1.3" fill="#bdbdbd"/><circle cx="600" cy="480" r="1.3" fill="#bdbdbd"/><circle cx="395" cy="470" r="1.3" fill="#8f8f8f"/><circle cx="440" cy="470" r="1.3" fill="#909090"/></g>
<path d="M422.500 227 C425 222 433 218 440 215.400 L441 190 C441.500 178 446 165 453.500 159.300 C462 155 475 153.500 482 152.600 C495 151 510 150 515.500 150 C520 150 524 151.500 526.400 156 L545 197 L446 222 L434 236 C426 234 421.500 231 422.500 227 Z" fill="var(--hatsh,#a4a4a4)"/>
<path d="M429.200 231.300 C433 226 440 221.500 446.800 218.700 L448.500 182 C449 174 455 167 465.300 163.500 C480 159.500 500 156.500 515.500 155.900 C522 155.600 527 156.500 530.600 161.800 C534 167 541 185 544.800 197 C552 196.500 560 199 563.200 202 C566 205 566 209 559 213.700 C550 218 540 220 532.300 222 C510 227.500 480 233 465.300 234.600 C455 235.800 445 236.500 436.800 236.300 C431 236 428 234 429.200 231.300 Z" fill="var(--hat,#262626)"/>
<circle cx="480" cy="239" r="6.300" fill="var(--eye,#6a6a6a)"/><circle cx="518.300" cy="239" r="6.300" fill="var(--eye,#6a6a6a)"/>
<path d="M481 261.500 C487 274 515 273.500 521.500 260.500" fill="none" stroke="var(--eye,#686868)" stroke-width="5" stroke-linecap="round"/>
<g fill="none" stroke="var(--ice,#fff)" stroke-width="4.200" stroke-linecap="round" stroke-linejoin="round">
<path d="M456 285.500 Q472 294 491 298.500 M453 289 C452 300 457 309 465 313 C474 317 484 313 489 306"/>
<path d="M546 285 Q532 293 516 299 M549.500 288.500 C550 299 546 309 538 315.500 C530 321 521 319 517 310"/>
<path d="M497 294.500 H510 Q516 295 515.500 300 L514 307 Q513 310.500 509 310.500 H498 Q494 310.500 493 307 L491.500 300 Q491 295 497 294.500 Z" fill="var(--knot,#a3a3a3)"/>
</g>
<path d="M496.500 312 H511.500 L530 387.500 L503.500 417.500 L478.300 390 Z" fill="var(--tie,#f1f1f1)" stroke="var(--tie,#f1f1f1)" stroke-width="1.500" stroke-linejoin="round"/>
<path d="M504 313 H511.500 L530 387.500 L503.500 417.500 Z" fill="var(--tie2,#fafafa)"/>
<g fill="none" stroke="var(--ice,#fff)" stroke-width="3.700" stroke-linecap="round" stroke-linejoin="round">
<path d="M411 277.5q-6.7 0.8 -2.0 5.7t-2.0 5.7t-2.0 5.7t-2.0 5.7t-2.0 5.7t-2.0 5.7t-2.0 5.7t-2.0 5.7t-2.0 5.7t-2.0 5.7"/><path d="M593.8 277.5q-5.1 4.2 1.4 5.6t1.4 5.6t1.4 5.6t1.4 5.6t1.4 5.6t1.4 5.6t1.4 5.6t1.4 5.6t1.4 5.6t1.4 5.6"/><path d="M403 446q1.8 6.6 6.9 2.0t6.9 2.0t6.9 2.0t6.9 2.0t6.9 2.0t6.9 2.0t6.9 2.0t6.9 2.0t6.9 2.0t6.9 2.0"/><path d="M525 460q5.1 4.6 7.0 -2.0t7.0 -2.0t7.0 -2.0t7.0 -2.0t7.0 -2.0t7.0 -2.0t7.0 -2.0t7.0 -2.0t7.0 -2.0t7.0 -2.0"/>
</g>
</symbol>
</defs>
</svg>
<svg class="abs" id="doc" style="left:338.800px;top:133.400px" width="330.700" height="402.400" viewBox="339 133 330 403" preserveAspectRatio="none">
<use href="#gb" x="339" y="133" width="330" height="403"/>
<g stroke="#161616" stroke-width="1.300" fill="none"><circle cx="571.400" cy="323.600" r="3.600"/><path d="M571.400 314.500 v5.500 M571.400 327.200 v5.500 M562.300 323.600 h5.500 M575 323.600 h5.500"/><circle cx="571.400" cy="323.600" r="1" fill="#161616"/></g>
</svg>

<!-- TOPRIGHT -->
<svg class="abs" style="left:1085px;top:0;z-index:3" width="69" height="16" viewBox="1085 0 69 16">
<g stroke="#8c8ab4" stroke-width="1" fill="none"><path d="M1091 7h6"/><rect x="1106.500" y="3.500" width="4.500" height="4"/><path d="M1108 3.500v-1.200h4.500v4h-1.500"/><path d="M1126 3l4.500 4.500M1130.500 3l-4.500 4.500"/></g>
<rect x="1137.500" y="4" width="5.500" height="11" fill="#6b7a9c"/>
<rect x="1137.500" y="0" width="7" height="4.500" fill="#f4f6fb"/>
<rect x="1143" y="0" width="11" height="15" fill="#1c261e"/>
</svg>
<div class="abs" style="left:567px;top:0;width:6px;height:4px;background:#eef2fa;z-index:3"></div>
<div class="abs" style="left:565px;top:1px;width:2.500px;height:3px;background:#2b4a6a;z-index:3"></div>
<div class="abs" style="left:0;top:0;width:5px;height:6px;background:#8fb6e8;z-index:3"></div>
<div class="abs" style="left:10px;top:10.500px;width:5px;height:2px;background:#8a6248;z-index:3"></div>
<div class="abs" style="left:1138.500px;top:319.500px;width:6px;height:6px;background:#e9edf7;z-index:3"></div>
<div class="abs" style="left:1136.500px;top:313px;width:6px;height:22px;background:#4e5570;z-index:2"></div>
<!-- /TOPRIGHT -->
<!-- MENUS -->
<div class="abs menu" id="menu1" style="left:65.5px;top:11px;width:113px;height:215.5px">
<div class="it" style="top:1.7px"><b>模式(M)</b><u class="arr"></u></div>
<div class="it hl" style="top:14.4px"><b>调整(J)</b><u class="arr"></u></div>
<div class="sep" style="top:27.3px"></div>
<div class="it" style="top:27.7px"><b>自动色调(N)</b><i>Shift+Ctrl+L</i></div>
<div class="it" style="top:38.7px"><b>自动对比度(U)</b><i>Alt+Shift+Ctrl+L</i></div>
<div class="it" style="top:49.7px"><b>自动颜色(O)</b><i>Shift+Ctrl+B</i></div>
<div class="sep" style="top:61.5px"></div>
<div class="it" style="top:63.7px"><b>图像大小(I)...</b><i>Alt+Ctrl+I</i></div>
<div class="it" style="top:74.4px"><b>画布大小(S)...</b><i>Alt+Ctrl+C</i></div>
<div class="it" style="top:85.2px"><b>图像旋转(G)</b><u class="arr"></u></div>
<div class="it dis" style="top:95.7px"><b>裁剪(P)</b></div>
<div class="it" style="top:106.2px"><b>裁切(R)...</b></div>
<div class="it" style="top:116.9px"><b>显示全部(V)</b></div>
<div class="sep" style="top:129.0px"></div>
<div class="it" style="top:130.7px"><b>复制(D)...</b></div>
<div class="it" style="top:141.3px"><b>应用图像(Y)...</b></div>
<div class="it" style="top:151.9px"><b>计算(C)...</b></div>
<div class="sep" style="top:164.5px"></div>
<div class="it" style="top:166.9px"><b>变量(B)</b><u class="arr"></u></div>
<div class="it dis" style="top:176.3px"><b>应用数据组(L)...</b></div>
<div class="sep" style="top:188.5px"></div>
<div class="it dis" style="top:190.7px"><b>陷印(T)...</b></div>
<div class="sep" style="top:202.5px"></div>
<div class="it" style="top:204.7px"><b>分析(A)</b><u class="arr"></u></div>
</div>
<div class="abs menu" id="menu2" style="left:179px;top:24px;width:101px;height:250px">
<div class="it" style="top:1.2px"><b>亮度/对比度(C)...</b></div>
<div class="it hl" style="top:12.4px"><b>色阶(L)...</b><i>Ctrl+L</i></div>
<div class="it" style="top:23.0px"><b>曲线(U)...</b><i>Ctrl+M</i></div>
<div class="it" style="top:33.7px"><b>曝光度(E)...</b></div>
<div class="sep" style="top:46.0px"></div>
<div class="it" style="top:47.2px"><b>自然饱和度(V)...</b></div>
<div class="it" style="top:58.0px"><b>色相/饱和度(H)...</b><i>Ctrl+U</i></div>
<div class="it" style="top:68.7px"><b>色彩平衡(B)...</b><i>Ctrl+B</i></div>
<div class="it" style="top:79.4px"><b>黑白(K)...</b><i>Alt+Shift+Ctrl+B</i></div>
<div class="it" style="top:90.2px"><b>照片滤镜(F)...</b></div>
<div class="it" style="top:100.9px"><b>通道混合器(X)...</b></div>
<div class="it" style="top:111.7px"><b>颜色查找...</b></div>
<div class="sep" style="top:124.0px"></div>
<div class="it" style="top:125.7px"><b>反相(I)</b><i>Ctrl+I</i></div>
<div class="it" style="top:136.2px"><b>色调分离(P)...</b></div>
<div class="it" style="top:146.7px"><b>阈值(T)...</b></div>
<div class="it" style="top:157.7px"><b>渐变映射(G)...</b></div>
<div class="it" style="top:168.2px"><b>可选颜色(S)...</b></div>
<div class="sep" style="top:180.5px"></div>
<div class="it" style="top:181.7px"><b>阴影/高光(W)...</b></div>
<div class="it" style="top:192.7px"><b>HDR 色调...</b></div>
<div class="sep" style="top:204.5px"></div>
<div class="it" style="top:206.2px"><b>去色(D)</b><i>Shift+Ctrl+U</i></div>
<div class="it" style="top:217.0px"><b>匹配颜色(M)...</b></div>
<div class="it" style="top:227.7px"><b>替换颜色(R)...</b></div>
<div class="it" style="top:238.7px"><b>色调均化(Q)</b></div>
</div>
<!-- /MENUS -->
</div>
<!-- WATERMARK -->
<div class="abs" id="wm" style="left:767px;top:574.500px;height:40px;white-space:nowrap;color:#fff;font-size:29px;line-height:40px;text-shadow:1.500px 1.500px 0 #000,-1px -1px 0 #000,1.500px -1px 0 #000,-1px 1.500px 0 #000,2px 2px 1px #000;letter-spacing:0"><span id="wm1" style="font-weight:bold">头条</span><span id="wm2" style="margin-left:7px"><span style="letter-spacing:3px">@</span>爱学习的阿彻<span style="letter-spacing:2.700px">archer</span></span></div>
<svg class="abs" id="bd" style="left:1060px;top:594px" width="94" height="33" viewBox="0 0 94 33"><text x="5" y="24" font-family="'Liberation Sans','Noto Sans CJK SC',sans-serif" font-weight="bold" font-size="21.500" fill="#f2a023" stroke="#fff" stroke-width="3" paint-order="stroke" stroke-linejoin="round" textLength="85" lengthAdjust="spacingAndGlyphs">百度知道</text></svg>
<!-- /WATERMARK -->
</div>
</body>
</html>
